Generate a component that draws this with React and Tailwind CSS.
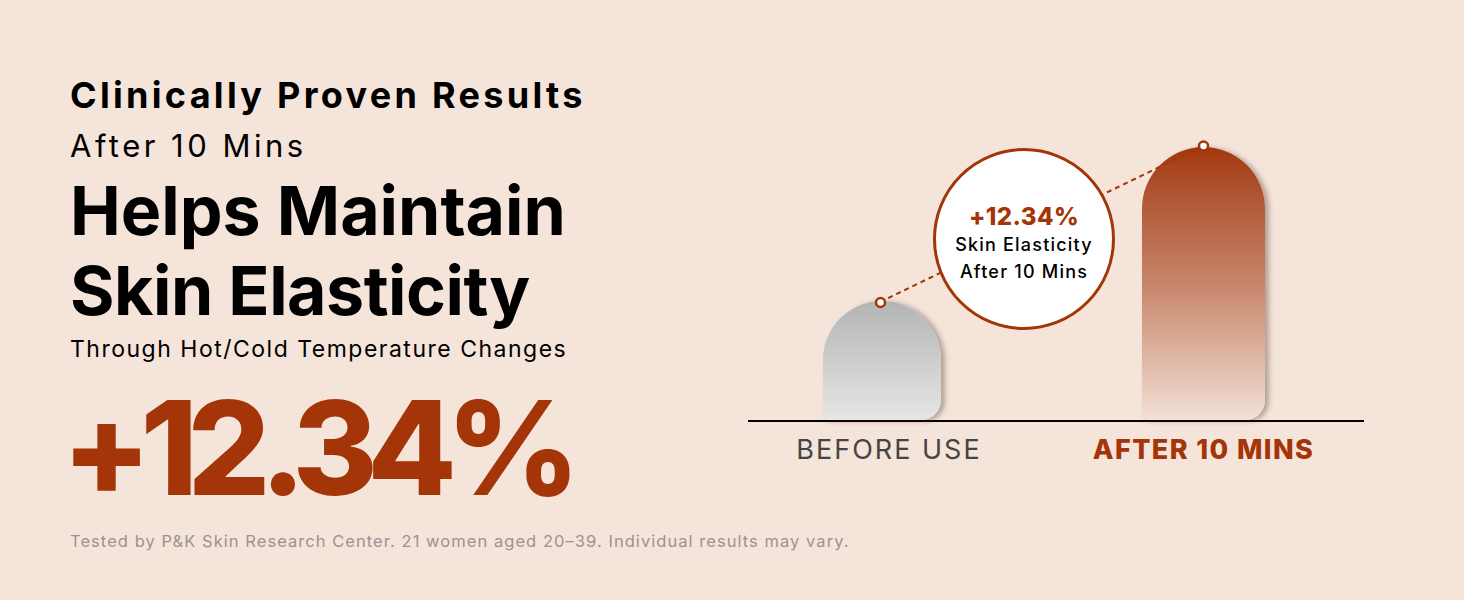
import React from "react";

export default function App() {
  return (
    <div className="w-[1464px] h-[600px] bg-[#f5e4da] flex overflow-hidden font-['Inter','Liberation_Sans',sans-serif] text-black">
      {/* Left copy */}
      <div className="w-[678px] shrink-0 pl-[70px] pt-[75px] flex flex-col">
        <div className="text-[36px] leading-[40px] font-bold tracking-[3.3px] whitespace-nowrap">Clinically Proven Results</div>
        <div className="mt-[13px] text-[31px] leading-[36px] font-normal tracking-[3.5px] whitespace-nowrap">After 10 Mins</div>
        <div className="mt-[6px] text-[68px] leading-[80px] font-bold whitespace-nowrap">Helps Maintain</div>
        <div className="text-[68px] leading-[80px] font-bold tracking-[-0.5px] whitespace-nowrap">Skin Elasticity</div>
        <div className="mt-[5px] text-[23px] leading-[28px] font-normal tracking-[1.5px] whitespace-nowrap">Through Hot/Cold Temperature Changes</div>
        <div className="mt-[20px] -ml-[8px] text-[130px] leading-[130px] font-extrabold text-[#a33508] tracking-[-10.5px] whitespace-nowrap">+12.34%</div>
        <div className="mt-[18px] text-[16.5px] leading-[20px] text-[#9a9390] tracking-[1.05px] whitespace-nowrap">Tested by P&amp;K Skin Research Center. 21 women aged 20–39. Individual results may vary.</div>
      </div>

      {/* Chart */}
      <div className="pt-[100px] pl-[70px] flex flex-col">
        <div className="relative w-[616px] h-[322px] border-b-2 border-black flex items-end">
          <div className="ml-[75px] w-[118px] h-[119px] rounded-tl-[59px] rounded-tr-[59px] rounded-br-[20px] bg-linear-to-b from-[#b4b4b4] to-[#e6e6e6] shadow-[4px_1px_5px_rgba(60,40,30,0.35)]" />
          <div className="ml-[201px] w-[123px] h-[273px] rounded-tl-[62px] rounded-tr-[62px] rounded-br-[20px] bg-linear-to-b from-[#a2370a] via-[#c6856a] to-[#f2e0d6] shadow-[4px_1px_5px_rgba(60,40,30,0.35)]" />

          <svg className="absolute left-0 top-0 w-[616px] h-[320px] overflow-visible" viewBox="0 0 616 320">
            <line x1="132" y1="202" x2="455" y2="46" stroke="#a33508" strokeWidth="2" strokeDasharray="5 4" />
            <circle cx="132.5" cy="202.5" r="4.5" fill="#fff" stroke="#a33508" strokeWidth="2.5" />
            <circle cx="455.5" cy="46" r="4.5" fill="#fff" stroke="#a33508" strokeWidth="2.5" />
          </svg>

          <div className="absolute left-[185px] top-[48px] w-[182px] h-[182px] rounded-full bg-white border-[3px] border-[#a33508] flex flex-col items-center justify-center">
            <div className="mt-[10px] text-[24px] leading-[28px] font-extrabold text-[#a33508] tracking-[0.4px]">+12.34%</div>
            <div className="text-[18px] leading-[27px] font-medium tracking-[1.2px]">Skin Elasticity</div>
            <div className="text-[18px] leading-[27px] font-medium tracking-[1.2px]">After 10 Mins</div>
          </div>
        </div>
        <div className="flex mt-[12px]">
          <div className="ml-[75px] w-[132px] flex justify-center">
            <span className="text-[27px] leading-[32px] font-normal text-[#454545] tracking-[2px] whitespace-nowrap">BEFORE USE</span>
          </div>
          <div className="ml-[187px] w-[123px] flex justify-center">
            <span className="text-[27px] leading-[32px] font-extrabold text-[#a33508] tracking-[1.4px] whitespace-nowrap">AFTER 10 MINS</span>
          </div>
        </div>
      </div>
    </div>
  );
}
